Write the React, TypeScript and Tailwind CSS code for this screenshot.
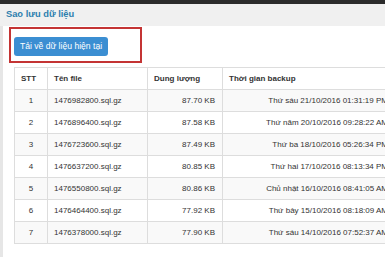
const rows = [
  { stt: 1, file: "1476982800.sql.gz", size: "87.70 KB", time: "Thứ sáu 21/10/2016 01:31:19 PM" },
  { stt: 2, file: "1476896400.sql.gz", size: "87.58 KB", time: "Thứ năm 20/10/2016 09:28:22 AM" },
  { stt: 3, file: "1476723600.sql.gz", size: "87.49 KB", time: "Thứ ba 18/10/2016 05:26:34 PM" },
  { stt: 4, file: "1476637200.sql.gz", size: "80.85 KB", time: "Thứ hai 17/10/2016 08:13:34 PM" },
  { stt: 5, file: "1476550800.sql.gz", size: "80.86 KB", time: "Chủ nhật 16/10/2016 08:41:05 AM" },
  { stt: 6, file: "1476464400.sql.gz", size: "77.92 KB", time: "Thứ bảy 15/10/2016 08:18:09 AM" },
  { stt: 7, file: "1476378000.sql.gz", size: "77.90 KB", time: "Thứ sáu 14/10/2016 07:52:37 AM" },
];

export default function App() {
  return (
    <div
      className="w-[385px] h-[257px] overflow-hidden bg-white flex flex-col"
      style={{ fontFamily: '"Liberation Sans", Arial, sans-serif' }}
    >
      {/* top dark bar */}
      <div className="h-[4px] bg-[#2b2b2b] shrink-0" />

      {/* page title */}
      <div className="h-[22px] bg-[#f0f0f0] flex items-center pl-[6px] shrink-0">
        <h1 className="text-[9.3px] font-bold text-[#2d7fae]">Sao lưu dữ liệu</h1>
      </div>

      <div className="flex flex-1">
        <div className="w-[3px] bg-[#e6e6e6] shrink-0" />

        <div className="relative pl-[11px] pt-[11px]">
          {/* annotation box around the button */}
          <div className="absolute left-[6px] top-[1px] w-[133px] h-[36px] border-2 border-[#c43434]" />

          <button className="h-[19px] w-[94px] rounded-[3px] bg-[#3b8ed2] text-white text-[8.6px] flex items-center justify-center">
            Tải về dữ liệu hiện tại
          </button>

          <table className="mt-[11px] w-[381px] table-fixed border-collapse text-[8px] text-[#333]">
            <colgroup>
              <col className="w-[33px]" />
              <col className="w-[100px]" />
              <col className="w-[75px]" />
              <col />
            </colgroup>
            <thead>
              <tr className="h-[22px]">
                <th className="border border-[#dddddd] text-left font-bold pl-[6px]">STT</th>
                <th className="border border-[#dddddd] text-left font-bold pl-[6px]">Tên file</th>
                <th className="border border-[#dddddd] text-left font-bold pl-[6px]">Dung lượng</th>
                <th className="border border-[#dddddd] text-left font-bold pl-[6px]">Thời gian backup</th>
              </tr>
            </thead>
            <tbody>
              {rows.map((r, i) => (
                <tr key={r.stt} className={`h-[22px] ${i % 2 === 0 ? "bg-[#f9f9f9]" : "bg-white"}`}>
                  <td className="border border-[#dddddd] text-center">{r.stt}</td>
                  <td className="border border-[#dddddd] pl-[6px] whitespace-nowrap">{r.file}</td>
                  <td className="border border-[#dddddd] text-right pr-[7px] whitespace-nowrap">{r.size}</td>
                  <td className="border border-[#dddddd] text-right pr-[6px] whitespace-nowrap">{r.time}</td>
                </tr>
              ))}
            </tbody>
          </table>
        </div>
      </div>
    </div>
  );
}
